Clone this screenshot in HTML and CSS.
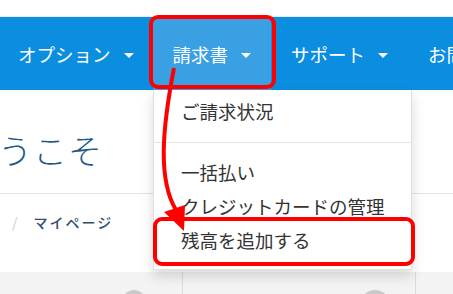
FILE: index.html
```html
<!DOCTYPE html>
<html lang="ja">
<head>
<meta charset="utf-8">
<link rel="stylesheet" href="styles.css">
</head>
<body>
<div class="page">
  <div class="topstrip"></div>
  <nav class="navbar">
    <div class="nav-item first">オプション<span class="caret"></span></div>
    <div class="nav-item active">請求書<span class="caret"></span></div>
    <div class="nav-item">サポート<span class="caret"></span></div>
    <div class="nav-item">お問い合わせ</div>
  </nav>
  <section class="welcome">
    <h1 class="title">ようこそ</h1>
  </section>
  <section class="crumbs">
    <span class="sep">/</span><span class="crumb">マイページ</span>
  </section>
  <section class="band">
    <div class="col c1"><span class="dot"></span></div>
    <div class="col c2"><span class="dot big"></span></div>
    <div class="col c3"></div>
  </section>

  <div class="dropdown">
    <div class="dd-item">ご請求状況</div>
    <div class="dd-divider"></div>
    <div class="dd-item">一括払い</div>
    <div class="dd-item">クレジットカードの管理</div>
    <div class="dd-item">残高を追加する</div>
  </div>

  <svg class="annot" width="453" height="294" viewBox="0 0 453 294">
    <rect x="151" y="17" width="123" height="70" rx="7" fill="none" stroke="#ff0000" stroke-width="4"/>
    <rect x="155" y="219" width="258" height="45" rx="7" fill="none" stroke="#ff0000" stroke-width="4"/>
    <path d="M174 68 C 162 130, 158 180, 176 210" fill="none" stroke="#ff0000" stroke-width="4"/>
    <polygon points="164,212 185,205 184,231" fill="#ff0000"/>
  </svg>
</div>
</body>
</html>
```

FILE: styles.css
```css
* { box-sizing: border-box; }
html, body { margin: 0; padding: 0; }
body {
  width: 453px;
  height: 294px;
  overflow: hidden;
  background: #fff;
  font-family: "Noto Sans CJK JP", "Noto Sans", sans-serif;
}
.page {
  position: relative;
  width: 453px;
  height: 294px;
  overflow: hidden;
}
.topstrip {
  height: 17px;
  border-bottom: 1px solid #e8eef3;
}
.navbar {
  height: 73px;
  background: #0b8ee0;
  display: flex;
  align-items: stretch;
  white-space: nowrap;
}
.nav-item {
  display: flex;
  align-items: center;
  padding: 0 20px;
  color: #fff;
  font-size: 18.5px;
  flex-shrink: 0;
}
.nav-item.first { padding-left: 18px; padding-right: 19px; }
.nav-item.active { background: #3aa0e4; }
.caret {
  display: inline-block;
  width: 0;
  height: 0;
  margin-left: 13px;
  margin-top: 3px;
  border-left: 5px solid transparent;
  border-right: 5px solid transparent;
  border-top: 5px solid #fff;
}
.welcome {
  height: 104px;
  padding-top: 40px;
  border-bottom: 1px solid #dde3e9;
}
.title {
  margin: 0 0 0 -37px;
  font-size: 34px;
  line-height: 40px;
  font-weight: 300;
  color: #1d5a8c;
  letter-spacing: 1px;
}
.crumbs {
  height: 78px;
  padding: 18px 0 0 12px;
  line-height: 20px;
  font-size: 14px;
}
.sep { color: #c8ccd0; }
.crumb {
  margin-left: 16px;
  color: #2f4f70;
  font-weight: 500;
  letter-spacing: 2px;
}
.band {
  height: 22px;
  background: #f3f3f3;
  display: flex;
}
.col {
  position: relative;
  height: 100%;
  display: flex;
}
.c1 { width: 183px; border-right: 1px solid #dcdcdc; padding-left: 122px; }
.c2 { width: 233px; border-right: 1px solid #dcdcdc; padding-left: 177px; }
.c3 { flex: 1; }
.dot {
  margin-top: 18px;
  width: 24px;
  height: 24px;
  border-radius: 50%;
  background: #c9c9c9;
}
.dot.big { width: 30px; height: 30px; }
.dropdown {
  position: absolute;
  top: 90px;
  left: 153px;
  width: 259px;
  height: 180px;
  background: #fff;
  border: 1px solid rgba(0,0,0,0.12);
  border-top: none;
  box-shadow: 0 6px 12px rgba(0,0,0,0.15);
  padding-top: 4px;
}
.dd-item {
  padding-left: 27px;
  line-height: 34px;
  font-size: 18.5px;
  color: #333;
  white-space: nowrap;
}
.dd-divider {
  height: 1px;
  background: #e5e5e5;
  margin: 14px 0 12px;
}
.annot {
  position: absolute;
  top: 0;
  left: 0;
}
```
